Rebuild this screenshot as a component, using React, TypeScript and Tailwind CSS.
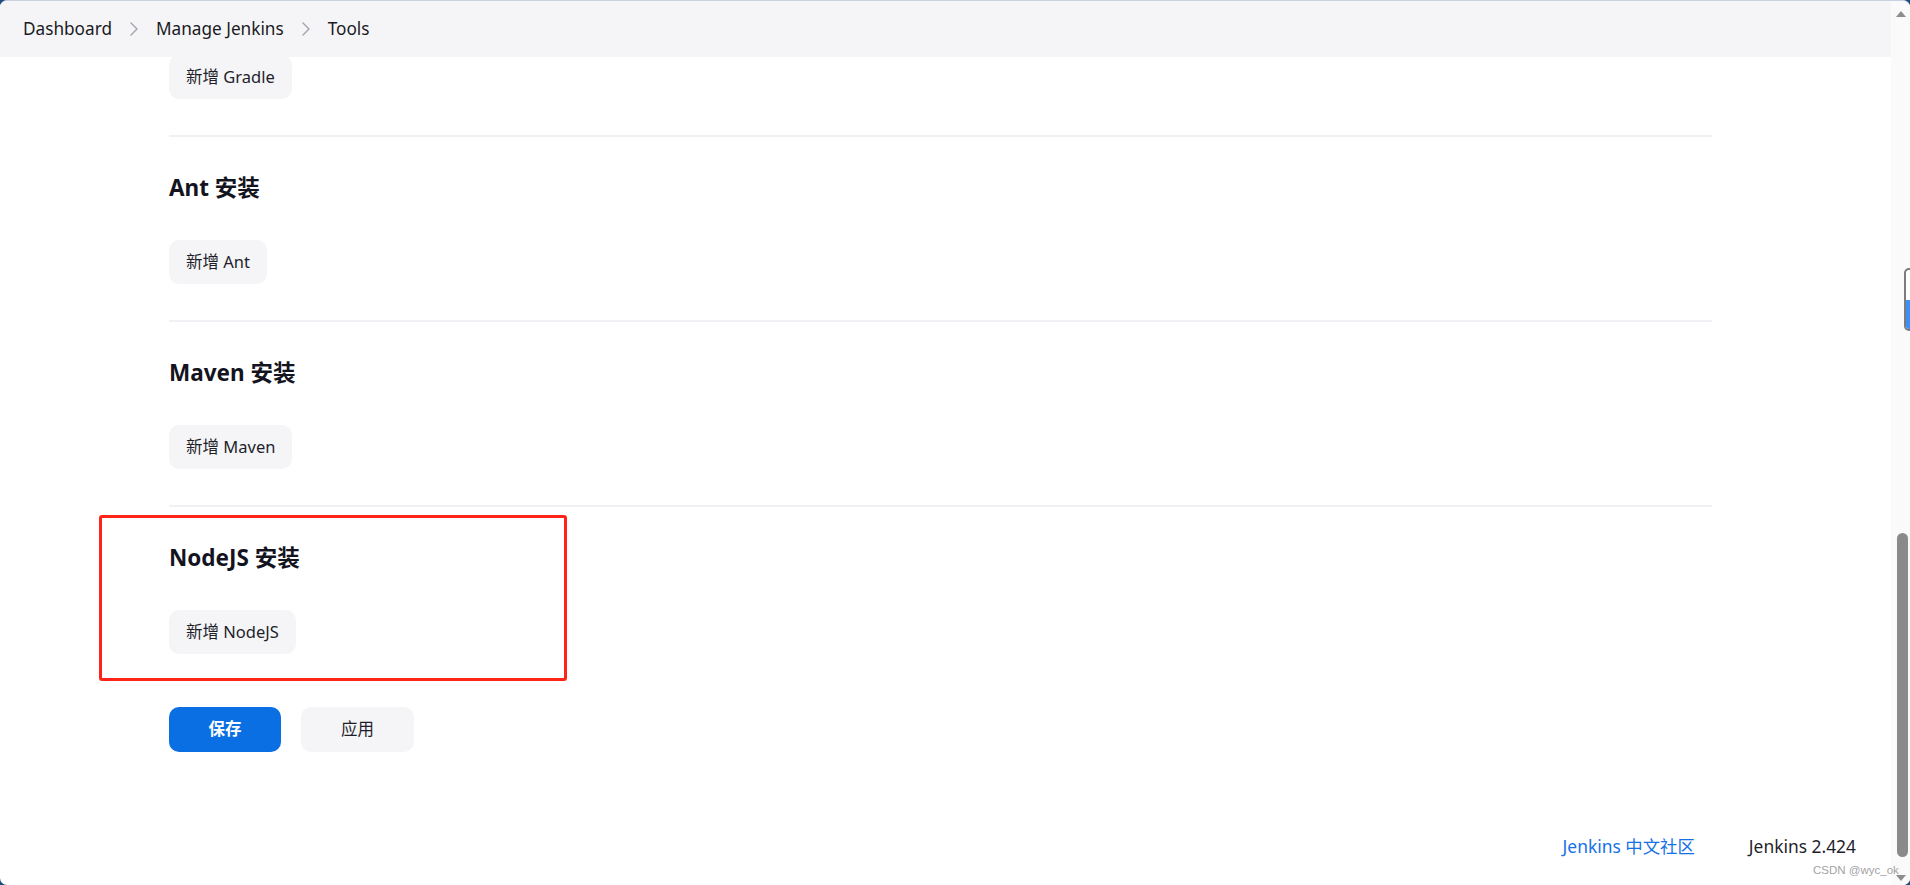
import { ChevronRight } from "lucide-react";

const sections = ["Ant", "Maven", "NodeJS"];

function AddButton({ label }: { label: string }) {
  return (
    <button className="h-[44px] rounded-[10px] bg-[#f5f5f7] px-[17px] text-[16.5px] text-[#1f1f2b]">
      新增 {label}
    </button>
  );
}

function Section({ name, highlight }: { name: string; highlight?: boolean }) {
  return (
    <div className="relative">
      <div className="h-[2px] bg-[#f1f1f5]" />
      <div className="flex flex-col items-start pt-[35px] pb-[36px]">
        <h2 className="h-[32px] text-[22.5px] font-bold leading-[32px] text-[#14141f]">{name} 安装</h2>
        <div className="mt-[36px]">
          <AddButton label={name} />
        </div>
      </div>
      {highlight && (
        <div className="pointer-events-none absolute left-[-70px] top-[10px] h-[166px] w-[468px] rounded-[3px] border-[3px] border-[#ff2418]" />
      )}
    </div>
  );
}

export default function App() {
  return (
    <div
      className="h-[885px] w-[1910px] overflow-hidden bg-[#1d4d78]"
      style={{ fontFamily: '"Noto Sans", "Noto Sans CJK SC", sans-serif' }}
    >
      <div className="relative flex h-full w-full overflow-hidden rounded-[7px] border-t border-[#c8d3e2] bg-white">
        {/* main page */}
        <div className="flex min-w-0 flex-1 flex-col">
          <header className="z-10 flex h-[56px] shrink-0 items-center bg-[#f5f5f7] pl-[23px] text-[17.2px] text-[#1a1a24]">
            <span>Dashboard</span>
            <ChevronRight size={24} strokeWidth={1.4} className="mx-[10px] text-[#a3a3ab]" />
            <span>Manage Jenkins</span>
            <ChevronRight size={24} strokeWidth={1.4} className="mx-[10px] text-[#a3a3ab]" />
            <span>Tools</span>
          </header>

          <main className="flex flex-1 flex-col overflow-hidden">
            <div className="-mt-[2px] w-[1543px] pl-[169px] box-content">
              <div className="flex flex-col items-start pb-[36px]">
                <AddButton label="Gradle" />
              </div>
              {sections.map((s) => (
                <Section key={s} name={s} highlight={s === "NodeJS"} />
              ))}
              <div className="mt-[17px] flex gap-[20px]">
                <button className="h-[45px] w-[112px] rounded-[10px] bg-[#0b6fe4] text-[16.5px] font-bold text-white">
                  保存
                </button>
                <button className="h-[45px] w-[113px] rounded-[10px] bg-[#f5f5f7] text-[16.5px] text-[#1f1f2b]">
                  应用
                </button>
              </div>
            </div>

            <footer className="mt-auto flex justify-end gap-[54px] pb-[26px] pr-[35px] text-[17.4px]">
              <a className="text-[#1471e6]">Jenkins 中文社区</a>
              <span className="text-[#1f1f2b]">Jenkins 2.424</span>
            </footer>
          </main>
        </div>

        {/* scrollbar */}
        <div className="flex w-[19px] shrink-0 flex-col items-center bg-[#fafafa]">
          <div className="mt-[10px] h-0 w-0 border-x-[5px] border-b-[6px] border-x-transparent border-b-[#8d8d8d]" />
          <div className="ml-[3px] mt-[516px] h-[324px] w-[11px] rounded-full bg-[#8a8a8a]" />
          <div className="mt-[18px] h-0 w-0 border-x-[5px] border-t-[6px] border-x-transparent border-t-[#8d8d8d]" />
        </div>

        {/* floating side widget */}
        <div className="absolute left-[1904px] top-[267px] h-[63px] w-[14px] overflow-hidden rounded-[5px] border-2 border-[#7c7c7c] bg-white">
          <div className="mt-[30px] h-full bg-[#3d8ef5]" />
        </div>

        {/* watermark */}
        <div className="pointer-events-none absolute left-[1813px] top-[861px] text-[11.5px] text-[#a3a3a3]" style={{ fontFamily: '"Liberation Sans", sans-serif' }}>
          CSDN @wyc_ok
        </div>
      </div>
    </div>
  );
}
